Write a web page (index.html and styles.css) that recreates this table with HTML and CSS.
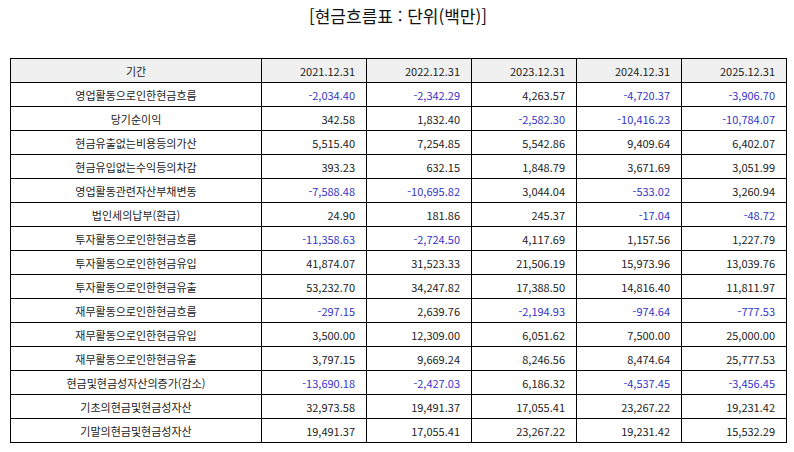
FILE: index.html
```html
<!DOCTYPE html>
<html lang="ko">
<head>
<meta charset="utf-8">
<link rel="stylesheet" href="styles.css">
</head>
<body>
<h1 class="title">[현금흐름표 : 단위(백만)]</h1>
<table class="cf">
<colgroup><col class="c-label"><col class="c-num"><col class="c-num"><col class="c-num"><col class="c-num"><col class="c-num"></colgroup>
<thead>
<tr><th class="lbl">기간</th><th>2021.12.31</th><th>2022.12.31</th><th>2023.12.31</th><th>2024.12.31</th><th>2025.12.31</th></tr>
</thead>
<tbody>
<tr><td class="lbl">영업활동으로인한현금흐름</td><td class="neg">-2,034.40</td><td class="neg">-2,342.29</td><td>4,263.57</td><td class="neg">-4,720.37</td><td class="neg">-3,906.70</td></tr>
<tr><td class="lbl">당기순이익</td><td>342.58</td><td>1,832.40</td><td class="neg">-2,582.30</td><td class="neg">-10,416.23</td><td class="neg">-10,784.07</td></tr>
<tr><td class="lbl">현금유출없는비용등의가산</td><td>5,515.40</td><td>7,254.85</td><td>5,542.86</td><td>9,409.64</td><td>6,402.07</td></tr>
<tr><td class="lbl">현금유입없는수익등의차감</td><td>393.23</td><td>632.15</td><td>1,848.79</td><td>3,671.69</td><td>3,051.99</td></tr>
<tr><td class="lbl">영업활동관련자산부채변동</td><td class="neg">-7,588.48</td><td class="neg">-10,695.82</td><td>3,044.04</td><td class="neg">-533.02</td><td>3,260.94</td></tr>
<tr><td class="lbl">법인세의납부(환급)</td><td>24.90</td><td>181.86</td><td>245.37</td><td class="neg">-17.04</td><td class="neg">-48.72</td></tr>
<tr><td class="lbl">투자활동으로인한현금흐름</td><td class="neg">-11,358.63</td><td class="neg">-2,724.50</td><td>4,117.69</td><td>1,157.56</td><td>1,227.79</td></tr>
<tr><td class="lbl">투자활동으로인한현금유입</td><td>41,874.07</td><td>31,523.33</td><td>21,506.19</td><td>15,973.96</td><td>13,039.76</td></tr>
<tr><td class="lbl">투자활동으로인한현금유출</td><td>53,232.70</td><td>34,247.82</td><td>17,388.50</td><td>14,816.40</td><td>11,811.97</td></tr>
<tr><td class="lbl">재무활동으로인한현금흐름</td><td class="neg">-297.15</td><td>2,639.76</td><td class="neg">-2,194.93</td><td class="neg">-974.64</td><td class="neg">-777.53</td></tr>
<tr><td class="lbl">재무활동으로인한현금유입</td><td>3,500.00</td><td>12,309.00</td><td>6,051.62</td><td>7,500.00</td><td>25,000.00</td></tr>
<tr><td class="lbl">재무활동으로인한현금유출</td><td>3,797.15</td><td>9,669.24</td><td>8,246.56</td><td>8,474.64</td><td>25,777.53</td></tr>
<tr><td class="lbl">현금및현금성자산의증가(감소)</td><td class="neg">-13,690.18</td><td class="neg">-2,427.03</td><td>6,186.32</td><td class="neg">-4,537.45</td><td class="neg">-3,456.45</td></tr>
<tr><td class="lbl">기초의현금및현금성자산</td><td>32,973.58</td><td>19,491.37</td><td>17,055.41</td><td>23,267.22</td><td>19,231.42</td></tr>
<tr><td class="lbl">기말의현금및현금성자산</td><td>19,491.37</td><td>17,055.41</td><td>23,267.22</td><td>19,231.42</td><td>15,532.29</td></tr>
</tbody>
</table>
</body>
</html>
```
FILE: styles.css
```css
html, body {
  margin: 0;
  padding: 0;
  background: #ffffff;
}
body {
  font-family: "Noto Sans CJK KR", "Noto Sans", sans-serif;
  color: #222222;
  padding: 0 8px 0 10px;
}
.title {
  margin: 0;
  height: 58px;
  padding-top: 5px;
  box-sizing: border-box;
  font-size: 17px;
  font-weight: normal;
  line-height: 22px;
  text-align: center;
  color: #111111;
}
.cf {
  border-collapse: collapse;
  table-layout: fixed;
  width: 776px;
  font-size: 11px;
}
.c-label { width: 251px; }
.c-num { width: 105px; }
.cf th, .cf td {
  border: 1px solid #000000;
  height: 23px;
  padding: 0 11px 0 4px;
  text-align: right;
  font-weight: normal;
  line-height: 14px;
  white-space: nowrap;
}
.cf th {
  background: #f0f0f0;
}
.cf .lbl {
  text-align: center;
  padding: 0 4px;
}
.cf .neg {
  color: #3535c8;
}
```
